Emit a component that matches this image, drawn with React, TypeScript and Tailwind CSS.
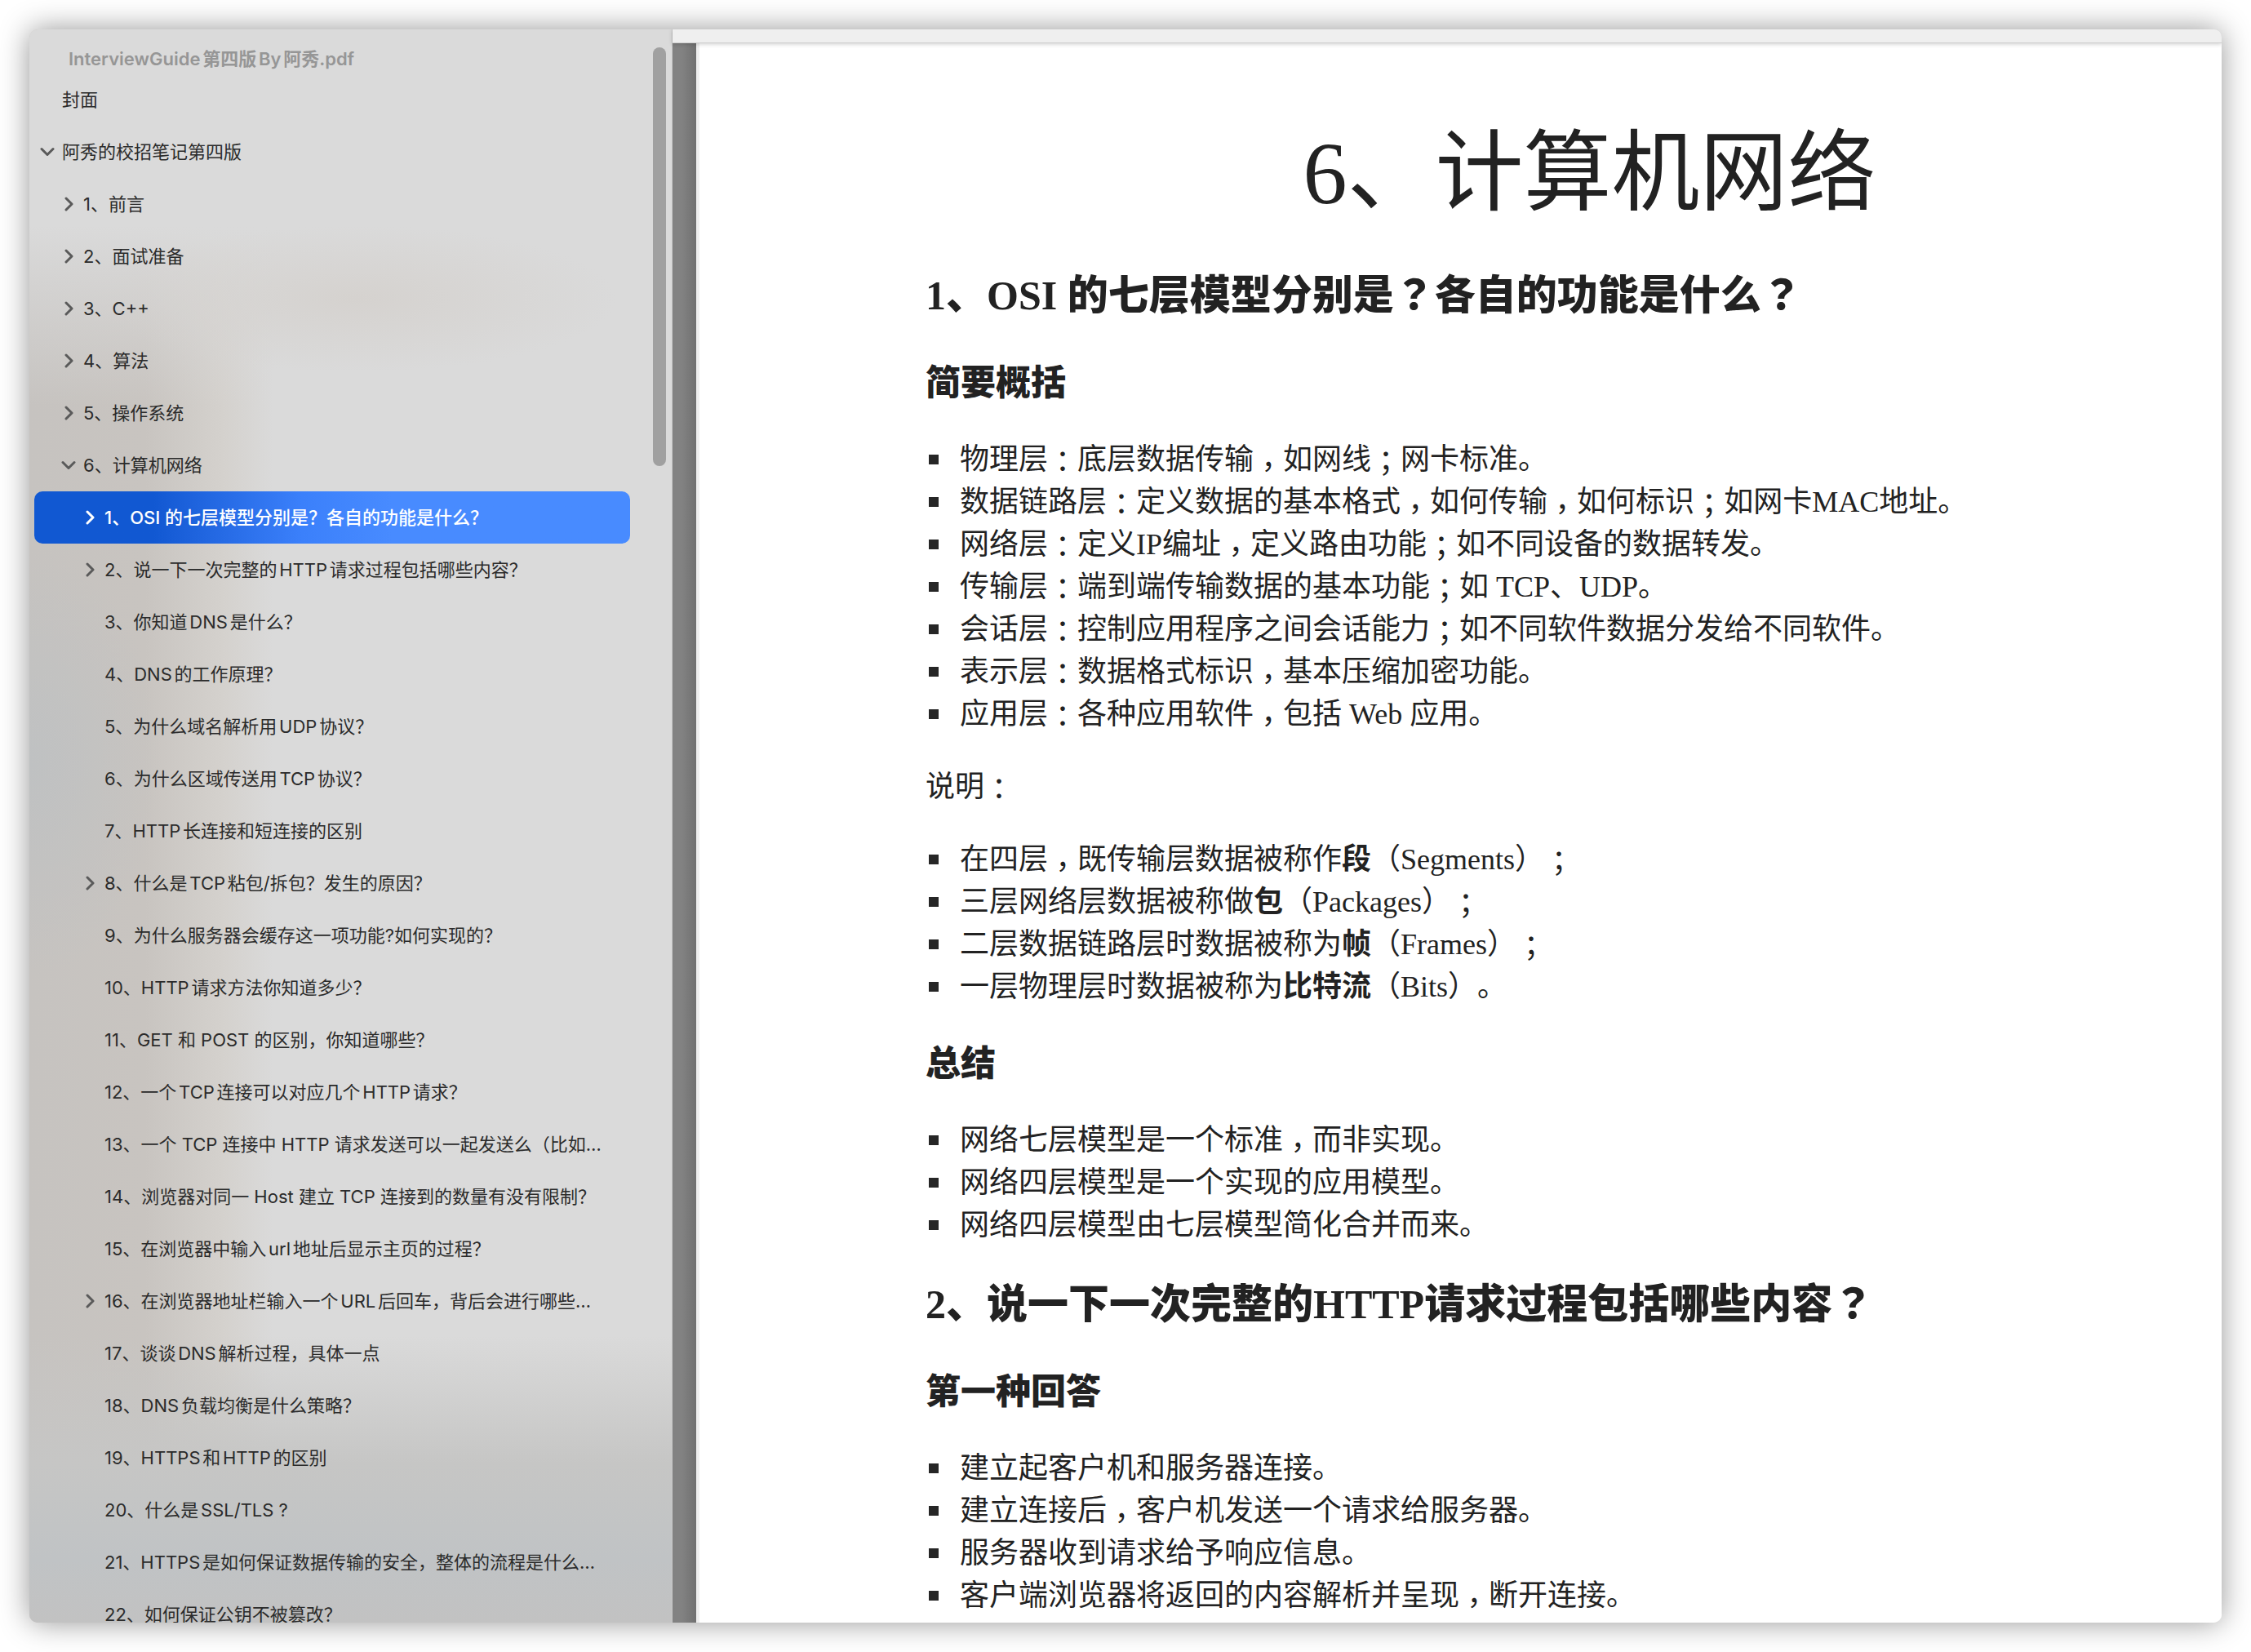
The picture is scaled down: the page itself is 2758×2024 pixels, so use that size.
import { Fragment, type ReactNode } from "react";

type Item = { text: string; level: number; state?: "open" | "closed"; selected?: boolean };

const outline: Item[] = [
  { text: "封面", level: 0 },
  { text: "阿秀的校招笔记第四版", level: 0, state: "open" },
  { text: "1、前言", level: 1, state: "closed" },
  { text: "2、面试准备", level: 1, state: "closed" },
  { text: "3、C++", level: 1, state: "closed" },
  { text: "4、算法", level: 1, state: "closed" },
  { text: "5、操作系统", level: 1, state: "closed" },
  { text: "6、计算机网络", level: 1, state: "open" },
  { text: "1、OSI 的七层模型分别是？各自的功能是什么？", level: 2, state: "closed", selected: true },
  { text: "2、说一下一次完整的HTTP请求过程包括哪些内容？", level: 2, state: "closed" },
  { text: "3、你知道DNS是什么？", level: 2 },
  { text: "4、DNS的工作原理？", level: 2 },
  { text: "5、为什么域名解析用UDP协议？", level: 2 },
  { text: "6、为什么区域传送用TCP协议？", level: 2 },
  { text: "7、HTTP长连接和短连接的区别", level: 2 },
  { text: "8、什么是TCP粘包/拆包？发生的原因？", level: 2, state: "closed" },
  { text: "9、为什么服务器会缓存这一项功能?如何实现的？", level: 2 },
  { text: "10、HTTP请求方法你知道多少？", level: 2 },
  { text: "11、GET 和 POST 的区别，你知道哪些？", level: 2 },
  { text: "12、一个TCP连接可以对应几个HTTP请求？", level: 2 },
  { text: "13、一个 TCP 连接中 HTTP 请求发送可以一起发送么（比如…", level: 2 },
  { text: "14、浏览器对同一 Host 建立 TCP 连接到的数量有没有限制？", level: 2 },
  { text: "15、在浏览器中输入url地址后显示主页的过程？", level: 2 },
  { text: "16、在浏览器地址栏输入一个URL后回车，背后会进行哪些…", level: 2, state: "closed" },
  { text: "17、谈谈DNS解析过程，具体一点", level: 2 },
  { text: "18、DNS负载均衡是什么策略？", level: 2 },
  { text: "19、HTTPS和HTTP的区别", level: 2 },
  { text: "20、什么是SSL/TLS ?", level: 2 },
  { text: "21、HTTPS是如何保证数据传输的安全，整体的流程是什么…", level: 2 },
  { text: "22、如何保证公钥不被篡改？", level: 2 },
];

const indent = ["pl-[2px]", "pl-[28px]", "pl-[54px]"];

function Chevron({ state }: { state?: "open" | "closed" }) {
  return (
    <span className="flex w-8 shrink-0 items-center justify-center pr-1" aria-hidden="true">
      {state === "closed" && (
        <svg width="12" height="18" viewBox="0 0 12 18" fill="none" stroke="currentColor" strokeWidth="3" strokeLinecap="round" strokeLinejoin="round">
          <path d="M3 2 10 9 3 16" />
        </svg>
      )}
      {state === "open" && (
        <svg width="18" height="12" viewBox="0 0 18 12" fill="none" stroke="currentColor" strokeWidth="3" strokeLinecap="round" strokeLinejoin="round">
          <path d="M2 2.5 9 9.5 16 2.5" />
        </svg>
      )}
    </span>
  );
}

function OutlineRow({ item }: { item: Item }) {
  return (
    <li>
      <button
        type="button"
        aria-current={item.selected ? "true" : undefined}
        className={`flex h-16 w-full items-center rounded-[10px] text-left whitespace-nowrap ${indent[item.level]} ${
          item.selected
            ? "bg-linear-to-r from-[#1158d2] from-20% via-[#3b80fb] via-45% to-[#488bff] to-60% font-medium text-white"
            : "text-[#2b2b2b]"
        }`}
      >
        <span className={item.selected ? "flex text-white" : "flex text-[#5a5a5a]"}>
          <Chevron state={item.state} />
        </span>
        <span>{item.text}</span>
      </button>
    </li>
  );
}

/** Full-width punctuation in the document sits in the middle of its cell, close to the baseline. */
function T({ children }: { children: string }) {
  return (
    <>
      {children.split(/([：；？（），])/).map((part, i) => {
        if (part === "，") return <span key={i} className="align-[-10px] font-['Noto_Sans_CJK_TC'] leading-none">{part}</span>;
        if (/^[：；]$/.test(part)) return <span key={i} className="align-[-4px] font-['Noto_Sans_CJK_TC'] leading-none">{part}</span>;
        if (/^[？（）]$/.test(part)) return <span key={i} className="font-['Noto_Sans_CJK_TC'] leading-none">{part}</span>;
        return <Fragment key={i}>{part}</Fragment>;
      })}
    </>
  );
}

function H2({ children }: { children: string }) {
  return <h2 className="text-[50px] leading-[60px] font-black"><T>{children}</T></h2>;
}

function H3({ children }: { children: string }) {
  return <h3 className="text-[43px] leading-[52px] font-black"><T>{children}</T></h3>;
}

function Bullets({ items }: { items: ReactNode[] }) {
  return (
    <ul>
      {items.map((item, i) => (
        <li key={i} className="flex h-[52px] items-center gap-[26px]">
          <span className="ml-[4px] size-[12px] shrink-0 bg-[#262626]" />
          <span>{item}</span>
        </li>
      ))}
    </ul>
  );
}

export default function App() {
  return (
    <main className="flex h-screen bg-white p-9">
      <div className="flex min-w-0 flex-1 overflow-hidden rounded-[10px] shadow-[0_0_36px_rgba(0,0,0,0.42)]">
        <aside
          className="relative w-[787px] shrink-0 overflow-hidden bg-[#dadada] bg-[linear-gradient(to_bottom,transparent_82%,#c6c6c5_90%,#c0c3c5_96%,#c2c2c2_100%),radial-gradient(ellipse_160px_260px_at_0px_900px,#bfc1c2,transparent),linear-gradient(to_right,#c6c3c0_0%,#c8c4c0_18%,#d4d1cd_30%,#dadada_38%)] font-[Inter,'Noto_Sans_CJK_SC',sans-serif] text-[22px] leading-[32px] [text-autospace:normal] [text-spacing-trim:space-all]"
        >
          <div className="absolute inset-x-0 top-0 h-[480px] bg-[radial-gradient(ellipse_320px_90px_at_400px_330px,#d5d2cf,transparent),linear-gradient(to_bottom,#dadada_50%,transparent_96%)]" />
          <nav className="relative flex flex-col pr-[51px] pl-[6px]" aria-label="目录">
            <h1 className="flex h-[54px] items-end pb-[2px] pl-[42px] font-semibold text-[#969696]">InterviewGuide第四版By阿秀.pdf</h1>
            <ul>
              {outline.map((item) => (
                <OutlineRow key={item.text} item={item} />
              ))}
            </ul>
          </nav>
          <div className="absolute top-[22px] right-[7px] h-[513px] w-4 rounded-full bg-[#a0a0a0]" />
        </aside>

        <section className="flex min-w-0 flex-1 flex-col border-l border-[#c8c8c8]">
          <div className="relative z-10 h-[17px] shrink-0 border-b border-[#d0d0d0] bg-[#efefef] shadow-[0_1px_5px_rgba(0,0,0,0.2)]" />
          <div className="flex min-h-0 flex-1 overflow-hidden bg-white">
            <div className="w-[29px] shrink-0 bg-linear-to-r from-[#828282] from-40% to-[#707070]" />
            <article className="min-w-0 flex-1 border-l-4 border-[#eeeeee] pr-[209px] pl-[277px] font-['Liberation_Serif','Noto_Sans_CJK_SC',serif] text-[36px] leading-[52px] whitespace-nowrap text-[#222222] [text-autospace:no-autospace] [text-spacing-trim:space-all]">
              <h1 className="mt-[95px] pl-[248px] text-center text-[108px] leading-[130px]">6、计算机网络</h1>
              <div className="mt-[54px]"><H2>1、OSI 的七层模型分别是？各自的功能是什么？</H2></div>
              <div className="mt-[52px]"><H3>简要概括</H3></div>
              <div className="mt-[41px]">
                <Bullets
                  items={[
                    <T>物理层：底层数据传输，如网线；网卡标准。</T>,
                    <T>数据链路层：定义数据的基本格式，如何传输，如何标识；如网卡MAC地址。</T>,
                    <T>网络层：定义IP编址，定义路由功能；如不同设备的数据转发。</T>,
                    <T>传输层：端到端传输数据的基本功能；如 TCP、UDP。</T>,
                    <T>会话层：控制应用程序之间会话能力；如不同软件数据分发给不同软件。</T>,
                    <T>表示层：数据格式标识，基本压缩加密功能。</T>,
                    <T>应用层：各种应用软件，包括 Web 应用。</T>,
                  ]}
                />
              </div>
              <p className="mt-[37px]"><T>说明：</T></p>
              <div className="mt-[37px]">
                <Bullets
                  items={[
                    <><T>在四层，既传输层数据被称作</T><strong>段</strong><T>（Segments）；</T></>,
                    <><T>三层网络层数据被称做</T><strong>包</strong><T>（Packages）；</T></>,
                    <><T>二层数据链路层时数据被称为</T><strong>帧</strong><T>（Frames）；</T></>,
                    <><T>一层物理层时数据被称为</T><strong>比特流</strong><T>（Bits）。</T></>,
                  ]}
                />
              </div>
              <div className="mt-[43px]"><H3>总结</H3></div>
              <div className="mt-[41px]">
                <Bullets
                  items={[
                    <T>网络七层模型是一个标准，而非实现。</T>,
                    <T>网络四层模型是一个实现的应用模型。</T>,
                    <T>网络四层模型由七层模型简化合并而来。</T>,
                  ]}
                />
              </div>
              <div className="mt-[41px]"><H2>2、说一下一次完整的HTTP请求过程包括哪些内容？</H2></div>
              <div className="mt-[52px]"><H3>第一种回答</H3></div>
              <div className="mt-[41px]">
                <Bullets
                  items={[
                    <T>建立起客户机和服务器连接。</T>,
                    <T>建立连接后，客户机发送一个请求给服务器。</T>,
                    <T>服务器收到请求给予响应信息。</T>,
                    <T>客户端浏览器将返回的内容解析并呈现，断开连接。</T>,
                  ]}
                />
              </div>
            </article>
          </div>
        </section>
      </div>
    </main>
  );
}
